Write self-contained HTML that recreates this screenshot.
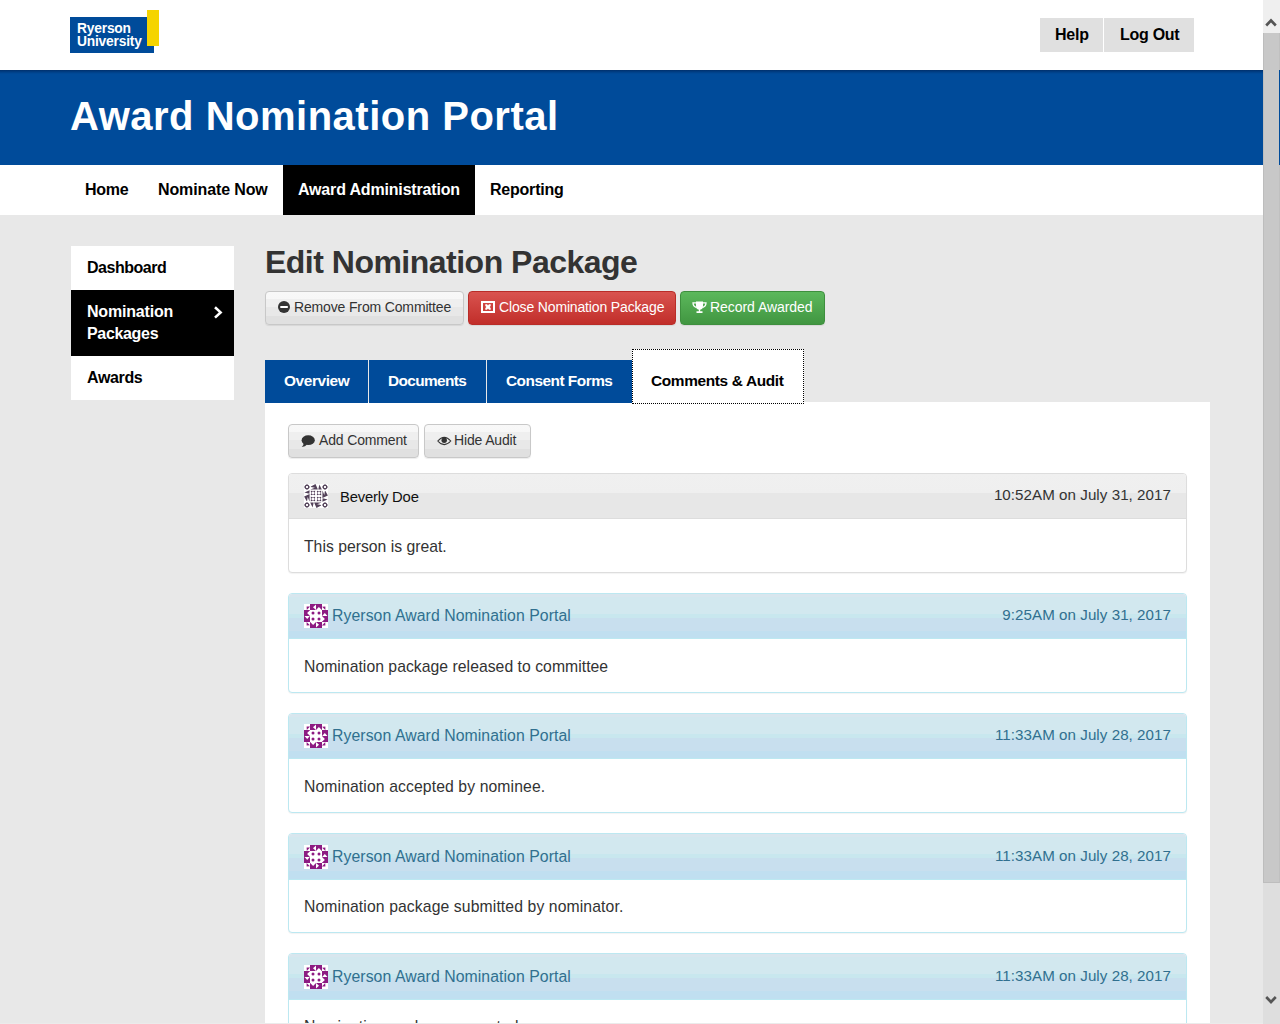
<!DOCTYPE html>
<html>
<head>
<meta charset="utf-8">
<style>
*{box-sizing:border-box;margin:0;padding:0}
html,body{width:1280px;height:1024px;overflow:hidden}
body{background:#e8e8e8;font-family:"Liberation Sans",sans-serif;position:relative;color:#333}
.abs{position:absolute}
.t{position:absolute;white-space:nowrap;line-height:1}
.ic{position:absolute;display:block}
#hdr{left:0;top:0;width:1280px;height:70px;background:#fff}
#banner{left:0;top:70px;width:1280px;height:95px;background:linear-gradient(#00306c 0px,#003f86 2px,#004b9a 4px)}
#nav{left:0;top:165px;width:1280px;height:50px;background:#fff}
.navi{position:absolute;top:0;height:50px;font-weight:bold;font-size:16px;color:#000}
.navi span{position:absolute;top:17px;white-space:nowrap;line-height:1}
.hbtn{position:absolute;top:18px;height:34px;background:#e0e0e0;font-weight:bold;font-size:16px;color:#000}
.hbtn span{position:absolute;top:9px;line-height:1;white-space:nowrap}
#side{left:71px;top:246px;width:163px;height:154px;background:#fff}
.sitem{position:absolute;left:0;width:163px;font-weight:bold;font-size:16px;color:#000}
.btn{position:absolute;height:34px;border-radius:4px;font-size:14px;white-space:nowrap}
.bdef{background:linear-gradient(#f8f8f8 0,#f7f7f7 7px,#efefef 7px,#efefef 15px,#e8e8e8 15px,#e8e8e8 24px,#e0e0e0 24px,#e0e0e0 100%);border:1px solid #c8c8c8;color:#333;box-shadow:0 1px 1px rgba(0,0,0,.075)}
.bred{background:linear-gradient(#d9534f,#c12e2a);border:1px solid #b92c28;color:#fff;box-shadow:0 1px 1px rgba(0,0,0,.075)}
.bgrn{background:linear-gradient(#5cb85c,#419641);border:1px solid #3e8f3e;color:#fff;box-shadow:0 1px 1px rgba(0,0,0,.075)}
.btn span{position:absolute;top:8px;line-height:1;letter-spacing:-0.15px}
.tab{position:absolute;top:360px;height:43px;background:#004b9a;color:#fff;font-weight:bold;font-size:15.4px}
.tab span{position:absolute;top:13px;line-height:1;white-space:nowrap}
#content{left:265px;top:402px;width:945px;height:622px;background:#fff}
.panel{position:absolute;left:288px;width:899px;height:100px;border-radius:4px;border:1px solid #ddd;box-shadow:0 1px 1px rgba(0,0,0,.05);background:#fff;overflow:hidden}
.ph{position:absolute;left:0;top:0;width:100%;height:45px;border-bottom:1px solid #ddd;background:linear-gradient(#f0f0f0 0,#efefef 19px,#e7e7e7 19px,#e7e7e7 100%)}
.pinfo{border-color:#bce8f1}
.pinfo .ph{background:linear-gradient(#d8e6ee 0,#d8e6ee 3px,#d2e8ef 3px,#d2e8ef 20px,#c8e7ee 20px,#c8e7ee 24px,#c8dfee 24px,#c8dfee 37px,#c0dff0 37px,#c0dff0 100%);border-bottom-color:#bce8f1;color:#31708f}
.hname{font-size:15.8px;letter-spacing:0.07px}
.bname{font-size:14.8px;color:#111;letter-spacing:-0.17px}
.ts{font-size:15.15px;letter-spacing:0.05px}
.body{font-size:15.75px;color:#333}
</style>
</head>
<body>
<div id="hdr" class="abs">
  <div class="abs" style="left:147px;top:10px;width:12px;height:36px;background:#f5d400"></div>
  <div class="abs" style="left:70px;top:17px;width:84px;height:36px;background:#004b9a"></div>
  <div class="abs" style="left:147px;top:17px;width:7px;height:29px;background:#f5d400"></div>
  <div class="t" style="left:77px;top:22px;font-size:13.8px;font-weight:bold;color:#fff;letter-spacing:-0.2px">Ryerson</div>
  <div class="t" style="left:77px;top:35px;font-size:13.8px;font-weight:bold;color:#fff;letter-spacing:-0.2px">University</div>
  <div class="hbtn" style="left:1040px;width:63px"><span style="left:15px;letter-spacing:-0.23px">Help</span></div>
  <div class="hbtn" style="left:1104px;width:90px"><span style="left:16px;letter-spacing:-0.28px">Log Out</span></div>
</div>
<div id="banner" class="abs">
  <div class="t" style="left:70px;top:26px;font-size:40px;font-weight:bold;color:#fff;letter-spacing:0.5px">Award Nomination Portal</div>
</div>
<div id="nav" class="abs">
  <div class="navi" style="left:70px;width:73px"><span style="left:15px;letter-spacing:-0.3px">Home</span></div>
  <div class="navi" style="left:143px;width:140px"><span style="left:15px;letter-spacing:-0.12px">Nominate Now</span></div>
  <div class="navi" style="left:283px;width:192px;background:#000;color:#fff"><span style="left:15px;letter-spacing:-0.17px">Award Administration</span></div>
  <div class="navi" style="left:475px;width:100px"><span style="left:15px;letter-spacing:-0.22px">Reporting</span></div>
</div>

<div id="side" class="abs">
  <div class="sitem" style="top:0;height:44px"><span class="t" style="left:16px;top:14px;letter-spacing:-0.47px">Dashboard</span></div>
  <div class="sitem" style="top:44px;height:66px;background:#000;color:#fff">
    <span class="t" style="left:16px;top:14px;letter-spacing:-0.18px">Nomination</span>
    <span class="t" style="left:16px;top:36px;letter-spacing:-0.33px">Packages</span>
    <svg class="ic" style="left:142px;top:16px" width="10" height="13" viewBox="0 0 10 13"><path d="M2 1.2L7.6 6.4L2 11.6" fill="none" stroke="#fff" stroke-width="2.6"/></svg>
  </div>
  <div class="sitem" style="top:110px;height:44px"><span class="t" style="left:16px;top:14px;letter-spacing:-0.36px">Awards</span></div>
</div>

<div class="t" style="left:265px;top:246px;font-size:32px;font-weight:bold;color:#333;letter-spacing:-0.51px">Edit Nomination Package</div>

<div class="btn bdef" style="left:265px;top:291px;width:199px">
  <svg class="ic" style="left:12px;top:9px" width="13" height="13" viewBox="0 0 13 13"><circle cx="6" cy="6" r="6" fill="#333"/><rect x="2.3" y="5" width="7.5" height="2" fill="#fff"/></svg>
  <span style="left:28px">Remove From Committee</span></div>
<div class="btn bred" style="left:468px;top:291px;width:208px">
  <svg class="ic" style="left:12px;top:9px" width="15" height="13" viewBox="0 0 15 13"><rect x="1" y="1" width="12" height="10" fill="none" stroke="#fff" stroke-width="2"/><path d="M4.3 3.3H6L7 4.4L8 3.3H9.7V5L8.6 6L9.7 7V8.7H8L7 7.6L6 8.7H4.3V7L5.4 6L4.3 5Z" fill="#fff"/></svg>
  <span style="left:30px">Close Nomination Package</span></div>
<div class="btn bgrn" style="left:680px;top:291px;width:145px">
  <svg class="ic" style="left:11px;top:9px" width="15" height="13" viewBox="0 0 15 13"><path d="M4 0.5 H11 V5 Q11 8.2 8.2 8.8 V10.3 H10.5 V12 H4.5 V10.3 H6.8 V8.8 Q4 8.2 4 5Z" fill="#fff"/><path d="M4 1.8 H1 Q1 5.5 4.6 6.6 M11 1.8 H14 Q14 5.5 10.4 6.6" fill="none" stroke="#fff" stroke-width="1.3"/></svg>
  <span style="left:29px;letter-spacing:-0.05px">Record Awarded</span></div>

<div id="content" class="abs"></div>
<div class="tab" style="left:265px;width:103px"><span style="left:19px;letter-spacing:-0.4px">Overview</span></div>
<div class="tab" style="left:369px;width:117px"><span style="left:19px;letter-spacing:-0.61px">Documents</span></div>
<div class="tab" style="left:487px;width:145px"><span style="left:19px;letter-spacing:-0.5px">Consent Forms</span></div>

<div class="tab" style="left:632px;top:349px;width:172px;height:55px;background:#fff;color:#000;border:1px dotted #000"><span style="left:18px;top:23px;letter-spacing:-0.34px">Comments &amp; Audit</span></div>

<div class="btn bdef" style="left:288px;top:424px;width:131px">
  <svg class="ic" style="left:12px;top:10px" width="15" height="13" viewBox="0 0 15 13"><ellipse cx="7.2" cy="5.2" rx="6.6" ry="4.9" fill="#333"/><path d="M2.5 8 Q3 10.5 0.8 12 Q4.5 11.8 6 9.5Z" fill="#333"/></svg>
  <span style="left:30px">Add Comment</span></div>
<div class="btn bdef" style="left:424px;top:424px;width:107px">
  <svg class="ic" style="left:12px;top:11px" width="15" height="11" viewBox="0 0 15 11"><path d="M0.8 5 Q7.2 -2.3 13.8 5 Q7.2 12.3 0.8 5Z" fill="none" stroke="#333" stroke-width="1.1"/><circle cx="7.2" cy="4.3" r="2.7" fill="#333"/></svg>
  <span style="left:29px">Hide Audit</span></div>

<div class="panel" style="top:473px">
  <div class="ph" style="height:45px"><svg class="ic" style="left:15px;top:10px" width="24" height="24" viewBox="0 0 24 24"><rect width="24" height="24" fill="#fff"/>
<g><path d="M3 0.2C4.7 1.1 4.9 1.3 5.8 3C4.9 4.7 4.7 4.9 3 5.8C1.3 4.9 1.1 4.7 0.2 3C1.1 1.3 1.3 1.1 3 0.2Z M2.05 2.05V3.95H3.95V2.05Z" fill="#54435a" fill-rule="evenodd"/>
<path d="M6.9 2.6L11.5 0.1L13.9 5.6L6.9 5.6L6.9 5.3L10.9 3.7L6.9 3.1Z" fill="#54435a"/>
<path d="M15.4 0.4L17.8 5.6L14.3 5.4Z" fill="#54435a"/>
<rect x="7.5" y="7.5" width="2.95" height="2.95" fill="#fbfafb" stroke="#9c8fa0" stroke-width="0.85"/>
<circle cx="7.5" cy="7.5" r="0.75" fill="#54435a"/><circle cx="10.45" cy="7.5" r="0.75" fill="#54435a"/><circle cx="7.5" cy="10.45" r="0.75" fill="#54435a"/><circle cx="10.45" cy="10.45" r="0.75" fill="#54435a"/>
<path d="M6.1 6.1H12" stroke="#c9c0cb" stroke-width="0.4"/></g><g transform="rotate(90 12 12)"><path d="M3 0.2C4.7 1.1 4.9 1.3 5.8 3C4.9 4.7 4.7 4.9 3 5.8C1.3 4.9 1.1 4.7 0.2 3C1.1 1.3 1.3 1.1 3 0.2Z M2.05 2.05V3.95H3.95V2.05Z" fill="#54435a" fill-rule="evenodd"/>
<path d="M6.9 2.6L11.5 0.1L13.9 5.6L6.9 5.6L6.9 5.3L10.9 3.7L6.9 3.1Z" fill="#54435a"/>
<path d="M15.4 0.4L17.8 5.6L14.3 5.4Z" fill="#54435a"/>
<rect x="7.5" y="7.5" width="2.95" height="2.95" fill="#fbfafb" stroke="#9c8fa0" stroke-width="0.85"/>
<circle cx="7.5" cy="7.5" r="0.75" fill="#54435a"/><circle cx="10.45" cy="7.5" r="0.75" fill="#54435a"/><circle cx="7.5" cy="10.45" r="0.75" fill="#54435a"/><circle cx="10.45" cy="10.45" r="0.75" fill="#54435a"/>
<path d="M6.1 6.1H12" stroke="#c9c0cb" stroke-width="0.4"/></g><g transform="rotate(180 12 12)"><path d="M3 0.2C4.7 1.1 4.9 1.3 5.8 3C4.9 4.7 4.7 4.9 3 5.8C1.3 4.9 1.1 4.7 0.2 3C1.1 1.3 1.3 1.1 3 0.2Z M2.05 2.05V3.95H3.95V2.05Z" fill="#54435a" fill-rule="evenodd"/>
<path d="M6.9 2.6L11.5 0.1L13.9 5.6L6.9 5.6L6.9 5.3L10.9 3.7L6.9 3.1Z" fill="#54435a"/>
<path d="M15.4 0.4L17.8 5.6L14.3 5.4Z" fill="#54435a"/>
<rect x="7.5" y="7.5" width="2.95" height="2.95" fill="#fbfafb" stroke="#9c8fa0" stroke-width="0.85"/>
<circle cx="7.5" cy="7.5" r="0.75" fill="#54435a"/><circle cx="10.45" cy="7.5" r="0.75" fill="#54435a"/><circle cx="7.5" cy="10.45" r="0.75" fill="#54435a"/><circle cx="10.45" cy="10.45" r="0.75" fill="#54435a"/>
<path d="M6.1 6.1H12" stroke="#c9c0cb" stroke-width="0.4"/></g><g transform="rotate(270 12 12)"><path d="M3 0.2C4.7 1.1 4.9 1.3 5.8 3C4.9 4.7 4.7 4.9 3 5.8C1.3 4.9 1.1 4.7 0.2 3C1.1 1.3 1.3 1.1 3 0.2Z M2.05 2.05V3.95H3.95V2.05Z" fill="#54435a" fill-rule="evenodd"/>
<path d="M6.9 2.6L11.5 0.1L13.9 5.6L6.9 5.6L6.9 5.3L10.9 3.7L6.9 3.1Z" fill="#54435a"/>
<path d="M15.4 0.4L17.8 5.6L14.3 5.4Z" fill="#54435a"/>
<rect x="7.5" y="7.5" width="2.95" height="2.95" fill="#fbfafb" stroke="#9c8fa0" stroke-width="0.85"/>
<circle cx="7.5" cy="7.5" r="0.75" fill="#54435a"/><circle cx="10.45" cy="7.5" r="0.75" fill="#54435a"/><circle cx="7.5" cy="10.45" r="0.75" fill="#54435a"/><circle cx="10.45" cy="10.45" r="0.75" fill="#54435a"/>
<path d="M6.1 6.1H12" stroke="#c9c0cb" stroke-width="0.4"/></g></svg><span class="t bname" style="left:51px;top:16px">Beverly Doe</span><span class="t ts" style="right:15px;top:13px">10:52AM on July 31, 2017</span></div>
  <span class="t body" style="left:15px;top:65px;letter-spacing:0px">This person is great.</span>
</div>

<div class="panel pinfo" style="top:593px">
  <div class="ph" style="height:45px"><svg class="ic" style="left:15px;top:10px" width="24" height="24" viewBox="0 0 24 24"><rect width="24" height="24" fill="#fff"/>
<g><path d="M0 0H6V6H0Z M6 0H12V6H6Z" fill="none"/>
<path d="M6 0H12V0.5L9 3.2L12 5.9V6H6Z" fill="#8d1b82"/>
<path d="M0 6H6V6.2L3.1 9.1L6 12H0Z" fill="#8d1b82"/>
<path d="M2.6 2.6H6L2.8 5.9Z" fill="#8d1b82"/>
<circle cx="9" cy="9" r="1.5" fill="#8d1b82"/></g><g transform="rotate(90 12 12)"><path d="M0 0H6V6H0Z M6 0H12V6H6Z" fill="none"/>
<path d="M6 0H12V0.5L9 3.2L12 5.9V6H6Z" fill="#8d1b82"/>
<path d="M0 6H6V6.2L3.1 9.1L6 12H0Z" fill="#8d1b82"/>
<path d="M2.6 2.6H6L2.8 5.9Z" fill="#8d1b82"/>
<circle cx="9" cy="9" r="1.5" fill="#8d1b82"/></g><g transform="rotate(180 12 12)"><path d="M0 0H6V6H0Z M6 0H12V6H6Z" fill="none"/>
<path d="M6 0H12V0.5L9 3.2L12 5.9V6H6Z" fill="#8d1b82"/>
<path d="M0 6H6V6.2L3.1 9.1L6 12H0Z" fill="#8d1b82"/>
<path d="M2.6 2.6H6L2.8 5.9Z" fill="#8d1b82"/>
<circle cx="9" cy="9" r="1.5" fill="#8d1b82"/></g><g transform="rotate(270 12 12)"><path d="M0 0H6V6H0Z M6 0H12V6H6Z" fill="none"/>
<path d="M6 0H12V0.5L9 3.2L12 5.9V6H6Z" fill="#8d1b82"/>
<path d="M0 6H6V6.2L3.1 9.1L6 12H0Z" fill="#8d1b82"/>
<path d="M2.6 2.6H6L2.8 5.9Z" fill="#8d1b82"/>
<circle cx="9" cy="9" r="1.5" fill="#8d1b82"/></g></svg><span class="t hname" style="left:43px;top:14px">Ryerson Award Nomination Portal</span><span class="t ts" style="right:15px;top:13px">9:25AM on July 31, 2017</span></div>
  <span class="t body" style="left:15px;top:65px;letter-spacing:0.03px">Nomination package released to committee</span>
</div>

<div class="panel pinfo" style="top:713px">
  <div class="ph" style="height:45px"><svg class="ic" style="left:15px;top:10px" width="24" height="24" viewBox="0 0 24 24"><rect width="24" height="24" fill="#fff"/>
<g><path d="M0 0H6V6H0Z M6 0H12V6H6Z" fill="none"/>
<path d="M6 0H12V0.5L9 3.2L12 5.9V6H6Z" fill="#8d1b82"/>
<path d="M0 6H6V6.2L3.1 9.1L6 12H0Z" fill="#8d1b82"/>
<path d="M2.6 2.6H6L2.8 5.9Z" fill="#8d1b82"/>
<circle cx="9" cy="9" r="1.5" fill="#8d1b82"/></g><g transform="rotate(90 12 12)"><path d="M0 0H6V6H0Z M6 0H12V6H6Z" fill="none"/>
<path d="M6 0H12V0.5L9 3.2L12 5.9V6H6Z" fill="#8d1b82"/>
<path d="M0 6H6V6.2L3.1 9.1L6 12H0Z" fill="#8d1b82"/>
<path d="M2.6 2.6H6L2.8 5.9Z" fill="#8d1b82"/>
<circle cx="9" cy="9" r="1.5" fill="#8d1b82"/></g><g transform="rotate(180 12 12)"><path d="M0 0H6V6H0Z M6 0H12V6H6Z" fill="none"/>
<path d="M6 0H12V0.5L9 3.2L12 5.9V6H6Z" fill="#8d1b82"/>
<path d="M0 6H6V6.2L3.1 9.1L6 12H0Z" fill="#8d1b82"/>
<path d="M2.6 2.6H6L2.8 5.9Z" fill="#8d1b82"/>
<circle cx="9" cy="9" r="1.5" fill="#8d1b82"/></g><g transform="rotate(270 12 12)"><path d="M0 0H6V6H0Z M6 0H12V6H6Z" fill="none"/>
<path d="M6 0H12V0.5L9 3.2L12 5.9V6H6Z" fill="#8d1b82"/>
<path d="M0 6H6V6.2L3.1 9.1L6 12H0Z" fill="#8d1b82"/>
<path d="M2.6 2.6H6L2.8 5.9Z" fill="#8d1b82"/>
<circle cx="9" cy="9" r="1.5" fill="#8d1b82"/></g></svg><span class="t hname" style="left:43px;top:14px">Ryerson Award Nomination Portal</span><span class="t ts" style="right:15px;top:13px">11:33AM on July 28, 2017</span></div>
  <span class="t body" style="left:15px;top:65px;letter-spacing:0.1px">Nomination accepted by nominee.</span>
</div>

<div class="panel pinfo" style="top:833px">
  <div class="ph" style="height:46px"><svg class="ic" style="left:15px;top:11px" width="24" height="24" viewBox="0 0 24 24"><rect width="24" height="24" fill="#fff"/>
<g><path d="M0 0H6V6H0Z M6 0H12V6H6Z" fill="none"/>
<path d="M6 0H12V0.5L9 3.2L12 5.9V6H6Z" fill="#8d1b82"/>
<path d="M0 6H6V6.2L3.1 9.1L6 12H0Z" fill="#8d1b82"/>
<path d="M2.6 2.6H6L2.8 5.9Z" fill="#8d1b82"/>
<circle cx="9" cy="9" r="1.5" fill="#8d1b82"/></g><g transform="rotate(90 12 12)"><path d="M0 0H6V6H0Z M6 0H12V6H6Z" fill="none"/>
<path d="M6 0H12V0.5L9 3.2L12 5.9V6H6Z" fill="#8d1b82"/>
<path d="M0 6H6V6.2L3.1 9.1L6 12H0Z" fill="#8d1b82"/>
<path d="M2.6 2.6H6L2.8 5.9Z" fill="#8d1b82"/>
<circle cx="9" cy="9" r="1.5" fill="#8d1b82"/></g><g transform="rotate(180 12 12)"><path d="M0 0H6V6H0Z M6 0H12V6H6Z" fill="none"/>
<path d="M6 0H12V0.5L9 3.2L12 5.9V6H6Z" fill="#8d1b82"/>
<path d="M0 6H6V6.2L3.1 9.1L6 12H0Z" fill="#8d1b82"/>
<path d="M2.6 2.6H6L2.8 5.9Z" fill="#8d1b82"/>
<circle cx="9" cy="9" r="1.5" fill="#8d1b82"/></g><g transform="rotate(270 12 12)"><path d="M0 0H6V6H0Z M6 0H12V6H6Z" fill="none"/>
<path d="M6 0H12V0.5L9 3.2L12 5.9V6H6Z" fill="#8d1b82"/>
<path d="M0 6H6V6.2L3.1 9.1L6 12H0Z" fill="#8d1b82"/>
<path d="M2.6 2.6H6L2.8 5.9Z" fill="#8d1b82"/>
<circle cx="9" cy="9" r="1.5" fill="#8d1b82"/></g></svg><span class="t hname" style="left:43px;top:15px">Ryerson Award Nomination Portal</span><span class="t ts" style="right:15px;top:14px">11:33AM on July 28, 2017</span></div>
  <span class="t body" style="left:15px;top:65px;letter-spacing:0.1px">Nomination package submitted by nominator.</span>
</div>

<div class="panel pinfo" style="top:953px">
  <div class="ph" style="height:46px"><svg class="ic" style="left:15px;top:11px" width="24" height="24" viewBox="0 0 24 24"><rect width="24" height="24" fill="#fff"/>
<g><path d="M0 0H6V6H0Z M6 0H12V6H6Z" fill="none"/>
<path d="M6 0H12V0.5L9 3.2L12 5.9V6H6Z" fill="#8d1b82"/>
<path d="M0 6H6V6.2L3.1 9.1L6 12H0Z" fill="#8d1b82"/>
<path d="M2.6 2.6H6L2.8 5.9Z" fill="#8d1b82"/>
<circle cx="9" cy="9" r="1.5" fill="#8d1b82"/></g><g transform="rotate(90 12 12)"><path d="M0 0H6V6H0Z M6 0H12V6H6Z" fill="none"/>
<path d="M6 0H12V0.5L9 3.2L12 5.9V6H6Z" fill="#8d1b82"/>
<path d="M0 6H6V6.2L3.1 9.1L6 12H0Z" fill="#8d1b82"/>
<path d="M2.6 2.6H6L2.8 5.9Z" fill="#8d1b82"/>
<circle cx="9" cy="9" r="1.5" fill="#8d1b82"/></g><g transform="rotate(180 12 12)"><path d="M0 0H6V6H0Z M6 0H12V6H6Z" fill="none"/>
<path d="M6 0H12V0.5L9 3.2L12 5.9V6H6Z" fill="#8d1b82"/>
<path d="M0 6H6V6.2L3.1 9.1L6 12H0Z" fill="#8d1b82"/>
<path d="M2.6 2.6H6L2.8 5.9Z" fill="#8d1b82"/>
<circle cx="9" cy="9" r="1.5" fill="#8d1b82"/></g><g transform="rotate(270 12 12)"><path d="M0 0H6V6H0Z M6 0H12V6H6Z" fill="none"/>
<path d="M6 0H12V0.5L9 3.2L12 5.9V6H6Z" fill="#8d1b82"/>
<path d="M0 6H6V6.2L3.1 9.1L6 12H0Z" fill="#8d1b82"/>
<path d="M2.6 2.6H6L2.8 5.9Z" fill="#8d1b82"/>
<circle cx="9" cy="9" r="1.5" fill="#8d1b82"/></g></svg><span class="t hname" style="left:43px;top:15px">Ryerson Award Nomination Portal</span><span class="t ts" style="right:15px;top:14px">11:33AM on July 28, 2017</span></div>
  <span class="t body" style="left:15px;top:65px;letter-spacing:0.1px">Nomination package accepted.</span>
</div>


<div class="abs" style="left:0;top:1023px;width:1280px;height:1px;background:#ebebeb"></div>
<!-- scrollbar -->
<div class="abs" style="left:1263px;top:0;width:17px;height:1024px;background:#dedede">
  <div class="abs" style="left:0;top:0;width:17px;height:33px;background:#efefef"></div>
  <svg class="ic" style="left:2px;top:15px" width="12" height="12" viewBox="0 0 12 12"><path d="M1.2 10.5L6 5.5L10.8 10.5" fill="none" stroke="#555" stroke-width="2.6"/></svg>
  <div class="abs" style="left:0;top:33px;width:17px;height:850px;background:#c8c8c8;border-left:1px solid #bdbdbd;border-right:1px solid #c0c0c0;border-bottom:1px solid #bdbdbd"></div>
  <svg class="ic" style="left:2px;top:995px" width="12" height="12" viewBox="0 0 12 12"><path d="M1.2 2L6 7L10.8 2" fill="none" stroke="#555" stroke-width="2.6"/></svg>
</div>
<div class="abs" style="left:1279px;top:70px;width:1px;height:95px;background:#004b9a"></div>
</body>
</html>
